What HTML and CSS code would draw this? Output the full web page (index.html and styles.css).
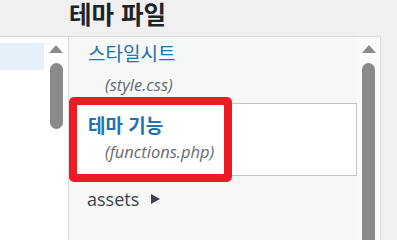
FILE: index.html
```html
<!DOCTYPE html>
<html lang="ko">
<head>
<meta charset="utf-8">
<title>테마 파일</title>
<link rel="stylesheet" href="styles.css">
</head>
<body>
<div class="page">
  <h2 class="heading">테마 파일</h2>
  <div class="main">
    <div class="side">
      <div class="side-list">
        <div class="side-row selected"></div>
      </div>
      <div class="scrollbar">
        <span class="arrow-up"></span>
        <span class="thumb short"></span>
      </div>
    </div>
    <div class="files">
      <div class="files-content">
        <ul class="file-list">
          <li class="file-item first">
            <a class="file-title">스타일시트</a>
            <span class="file-name">(style.css)</span>
          </li>
          <li class="file-item current">
            <a class="file-title strong">테마 기능</a>
            <span class="file-name">(functions.php)</span>
          </li>
          <li class="folder-item">
            <span class="folder-name">assets</span>
            <span class="folder-arrow"></span>
          </li>
        </ul>
        <div class="highlight"></div>
      </div>
      <div class="scrollbar">
        <span class="arrow-up"></span>
        <span class="thumb long"></span>
      </div>
    </div>
  </div>
</div>
</body>
</html>
```

FILE: styles.css
```css
html, body {
  margin: 0;
  padding: 0;
}
body {
  background: #f0f0f0;
  width: 397px;
  height: 100vh;
  overflow: hidden;
  font-family: "Open Sans", "Noto Sans CJK KR", sans-serif;
}
.page {
  display: flex;
  flex-direction: column;
  height: 100vh;
}
.heading {
  margin: 0;
  height: 36px;
  flex: none;
  box-sizing: border-box;
  padding-left: 69px;
  font-family: "Noto Sans CJK KR", sans-serif;
  font-weight: 700;
  font-size: 24.5px;
  line-height: 28px;
  color: #1d2327;
}
.main {
  display: flex;
  flex: 1;
  min-height: 0;
}
.side {
  width: 68px;
  display: flex;
  border-top: 1px solid #dcdcde;
  background: #fff;
}
.side-list {
  width: 44px;
  padding-top: 6px;
}
.side-row {
  height: 27px;
}
.side-row.selected {
  background: #e5f0fb;
}
.scrollbar {
  width: 23px;
  display: flex;
  flex-direction: column;
  align-items: center;
  padding-top: 8px;
  background: #fbfbfb;
  overflow: hidden;
}
.side .scrollbar {
  width: 24px;
  background: #fff;
}
.arrow-up {
  flex: none;
  width: 0;
  height: 0;
  border-left: 7.5px solid transparent;
  border-right: 7.5px solid transparent;
  border-bottom: 8px solid #8a8a8a;
}
.thumb {
  flex: none;
  width: 13px;
  margin-top: 10px;
  background: #8a8a8a;
  border-radius: 7px;
}
.thumb.short {
  height: 66px;
}
.thumb.long {
  height: 200px;
}
.files {
  width: 311px;
  display: flex;
  border: 1px solid #dcdcde;
  border-bottom: 0;
}
.files-content {
  position: relative;
  width: 288px;
  background: #f6f7f7;
  overflow: hidden;
}
.file-list {
  list-style: none;
  margin: 0;
  padding: 0;
}
.file-item {
  display: flex;
  flex-direction: column;
  padding-left: 19px;
}
.file-item.first {
  padding-top: 4px;
  padding-bottom: 7px;
}
.file-item.first .file-title {
  margin-bottom: 9px;
}
.file-item.current {
  padding-top: 9px;
  padding-bottom: 12px;
  background: #fff;
  border: 1px solid #c3c4c7;
  border-left: 0;
}
.file-item.current .file-title {
  margin-bottom: 4px;
}
.file-title {
  font-family: "Noto Sans CJK KR", sans-serif;
  font-size: 19px;
  line-height: 24px;
  color: #2271b1;
}
.file-title.strong {
  font-weight: 700;
}
.file-name {
  font-style: italic;
  font-size: 16.5px;
  line-height: 22px;
  color: #646970;
  padding-left: 17px;
}
.folder-item {
  display: flex;
  align-items: center;
  gap: 12px;
  padding: 11px 0 0 18px;
}
.folder-name {
  font-size: 18px;
  line-height: 24px;
  color: #3c434a;
}
.folder-arrow {
  width: 0;
  height: 0;
  border-top: 5.5px solid transparent;
  border-bottom: 5.5px solid transparent;
  border-left: 9px solid #3c434a;
}
.highlight {
  position: absolute;
  left: 0;
  top: 60px;
  width: 163px;
  height: 85px;
  box-sizing: border-box;
  border: 8px solid #ed1c24;
  border-radius: 5px;
}
```
